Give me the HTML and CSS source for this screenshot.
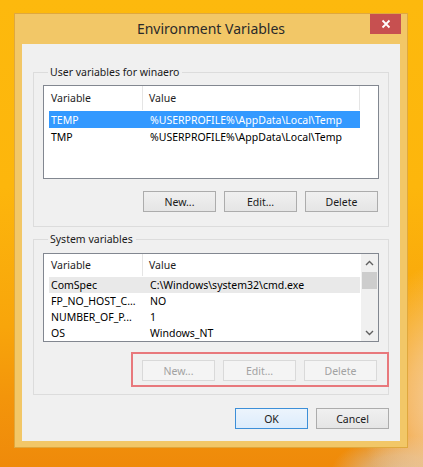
FILE: index.html
```html
<!DOCTYPE html>
<html>
<head>
<meta charset="utf-8">
<link rel="stylesheet" href="styles.css">
</head>
<body>
<div class="window">
  <div class="titlebar">
    <span></span>
    <span class="title">Environment Variables</span>
    <button class="close" aria-label="Close">
      <svg width="10" height="10" viewBox="0 0 10 10"><path d="M1.5 1.5 L8.5 8.5 M8.5 1.5 L1.5 8.5" stroke="#fff" stroke-width="1.8" fill="none"/></svg>
    </button>
  </div>
  <div class="client">
    <fieldset class="group g1">
      <legend>User variables for winaero</legend>
      <div class="list l1">
        <div class="lv">
          <div class="hdr"><span class="hc c1">Variable</span><span class="hc c2">Value</span><span class="hc c3"></span></div>
          <div class="row sel"><span class="c1">TEMP</span><span class="c2">%USERPROFILE%\AppData\Local\Temp</span></div>
          <div class="row"><span class="c1">TMP</span><span class="c2">%USERPROFILE%\AppData\Local\Temp</span></div>
        </div>
      </div>
      <div class="btnrow">
        <button class="btn">New...</button>
        <button class="btn">Edit...</button>
        <button class="btn">Delete</button>
      </div>
    </fieldset>
    <fieldset class="group g2">
      <legend>System variables</legend>
      <div class="list l2">
        <div class="lv">
          <div class="hdr"><span class="hc c1">Variable</span><span class="hc c2">Value</span></div>
          <div class="row gray"><span class="c1">ComSpec</span><span class="c2">C:\Windows\system32\cmd.exe</span></div>
          <div class="row"><span class="c1">FP_NO_HOST_C...</span><span class="c2">NO</span></div>
          <div class="row"><span class="c1">NUMBER_OF_P...</span><span class="c2">1</span></div>
          <div class="row"><span class="c1">OS</span><span class="c2">Windows_NT</span></div>
        </div>
        <div class="vscroll">
          <div class="arrow"><svg width="9" height="6" viewBox="0 0 9 6"><path d="M1 5 L4.5 1.5 L8 5" stroke="#606060" stroke-width="1.4" fill="none"/></svg></div>
          <div class="thumb"></div>
          <div class="track"></div>
          <div class="arrow"><svg width="9" height="6" viewBox="0 0 9 6"><path d="M1 1 L4.5 4.5 L8 1" stroke="#606060" stroke-width="1.4" fill="none"/></svg></div>
        </div>
      </div>
      <div class="btnrow marked">
        <button class="btn" disabled>New...</button>
        <button class="btn" disabled>Edit...</button>
        <button class="btn" disabled>Delete</button>
      </div>
    </fieldset>
    <div class="dlgrow">
      <button class="btn default">OK</button>
      <button class="btn">Cancel</button>
    </div>
  </div>
</div>
</body>
</html>
```
FILE: styles.css
```css
html, body {
  margin: 0;
  padding: 0;
}
body {
  width: 423px;
  height: 467px;
  overflow: hidden;
  font-family: "Noto Sans", "DejaVu Sans", sans-serif;
  font-size: 10.5px;
  color: #000;
  background:
    radial-gradient(ellipse 90px 140px at 450px 400px, rgba(246, 214, 175, 0.95) 0%, rgba(246, 214, 175, 0.6) 45%, rgba(246, 214, 175, 0) 100%),
    radial-gradient(ellipse 70px 40px at 400px 475px, rgba(220, 184, 140, 1) 0%, rgba(220, 184, 140, 0.7) 50%, rgba(220, 184, 140, 0) 100%),
    linear-gradient(180deg, #fdb90d 0%, #fdb60c 40%, #f8a50b 70%, #f3950b 85%, #ef8a0a 100%);
  padding-top: 13px;
  padding-left: 14px;
  box-sizing: border-box;
}
.window {
  width: 394px;
  height: 435px;
  box-sizing: border-box;
  background: #f2c767;
  border: 1px solid #dfa83e;
  display: flex;
  flex-direction: column;
  padding: 0 7px 6px 7px;
}
.titlebar {
  height: 30px;
  display: grid;
  grid-template-columns: 1fr auto 1fr;
  align-items: start;
}
.title {
  font-size: 14px;
  color: #2a2a2a;
  line-height: 30px;
}
.close {
  justify-self: end;
  width: 31px;
  height: 20px;
  margin: 0 -1px 0 0;
  border: 0;
  padding: 0;
  background: #c75050;
  display: flex;
  align-items: center;
  justify-content: center;
}
.client {
  flex: 1;
  background: #f0f0f0;
  display: flex;
  flex-direction: column;
  padding: 20px 11px 0 11px;
}
.group {
  margin: 0;
  padding: 5px 9px 14px 9px;
  border: 1px solid #dcdcdc;
  min-width: 0;
}
.group legend {
  padding: 0 3px 0 2px;
  margin-left: 5px;
  line-height: 16px;
  font-size: 10.5px;
  color: #1a1a1a;
}
.g2 {
  margin-top: 4px;
  padding-top: 6px;
}
.list {
  background: #fff;
  border: 1px solid #828790;
  display: flex;
}
.l1 { height: 92px; }
.l2 { height: 87px; }
.lv {
  flex: 1;
  display: flex;
  flex-direction: column;
}
.hdr {
  height: 24px;
  margin-bottom: 1px;
  display: flex;
  align-items: stretch;
}
.hc {
  display: flex;
  align-items: center;
  box-sizing: border-box;
  color: #1e1e1e;
}
.hdr .c1 {
  width: 99px;
  padding-left: 7px;
  border-right: 1px solid #e5e5e5;
}
.hdr .c2 {
  width: 217px;
  padding-left: 6px;
  border-right: 1px solid #e5e5e5;
}
.l2 .hdr .c2 { border-right: 0; }
.row {
  height: 17px;
  margin-left: 5px;
  width: 311px;
  display: flex;
  align-items: center;
  white-space: nowrap;
}
.row .c1 {
  width: 99px;
  padding-left: 2px;
  box-sizing: border-box;
}
.row .c2 {
  padding-left: 2px;
}
.row.sel {
  background: #3399ff;
  color: #fff;
}
.row.gray {
  background: #e9e9e9;
}
.vscroll {
  width: 17px;
  background: #f0f0f0;
  display: flex;
  flex-direction: column;
}
.arrow {
  height: 17px;
  display: flex;
  align-items: center;
  justify-content: center;
}
.thumb {
  height: 17px;
  margin: 1px 1px 0 1px;
  background: #cdcdcd;
}
.track { flex: 1; }
.btnrow {
  display: flex;
  justify-content: flex-end;
  gap: 8px;
  margin-top: 12px;
  padding-right: 1px;
}
.btn {
  width: 73px;
  height: 21px;
  margin: 0;
  padding: 0;
  box-sizing: border-box;
  font-family: "Noto Sans", "DejaVu Sans", sans-serif;
  font-size: 10.5px;
  color: #1a1a1a;
  background: linear-gradient(180deg, #f0f0f0 0%, #e5e5e5 100%);
  border: 1px solid #acacac;
}
.btn:disabled {
  background: #f4f4f4;
  border-color: #d9d9d9;
  color: #a2a2a2;
}
.btnrow.marked {
  margin-top: 10px;
  margin-left: auto;
  margin-right: -10px;
  border: 2px solid #e8787c;
  padding: 6px 10px 4px 9px;
  width: max-content;
}
.group.g2 { padding-bottom: 7px; }
.dlgrow {
  display: flex;
  justify-content: flex-end;
  gap: 8px;
  margin-top: 13px;
}
.dlgrow .btn { height: 21px; }
.btn.default {
  border-color: #3c8fd8;
  background: linear-gradient(180deg, #ecf4fc 0%, #dcecfc 100%);
}
```
